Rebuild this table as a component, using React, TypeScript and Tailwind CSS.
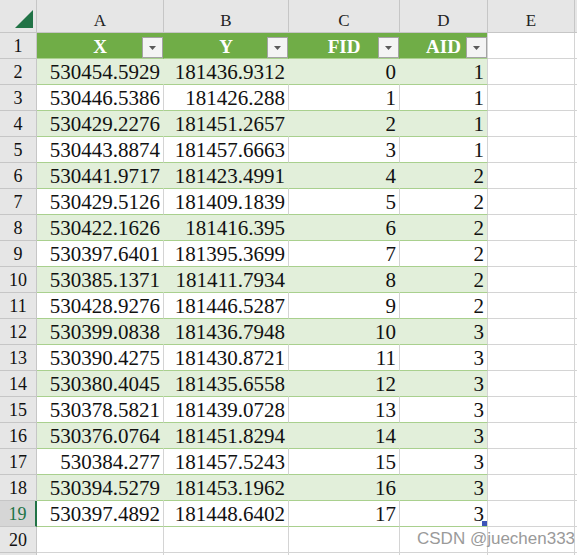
const rows: [string, string, number, number][] = [
  ['530454.5929', '181436.9312', 0, 1],
  ['530446.5386', '181426.288', 1, 1],
  ['530429.2276', '181451.2657', 2, 1],
  ['530443.8874', '181457.6663', 3, 1],
  ['530441.9717', '181423.4991', 4, 2],
  ['530429.5126', '181409.1839', 5, 2],
  ['530422.1626', '181416.395', 6, 2],
  ['530397.6401', '181395.3699', 7, 2],
  ['530385.1371', '181411.7934', 8, 2],
  ['530428.9276', '181446.5287', 9, 2],
  ['530399.0838', '181436.7948', 10, 3],
  ['530390.4275', '181430.8721', 11, 3],
  ['530380.4045', '181435.6558', 12, 3],
  ['530378.5821', '181439.0728', 13, 3],
  ['530376.0764', '181451.8294', 14, 3],
  ['530384.277', '181457.5243', 15, 3],
  ['530394.5279', '181453.1962', 16, 3],
  ['530397.4892', '181448.6402', 17, 3],
];

const RowHead = ({ n, sel }: { n?: number; sel?: boolean }) => (
  <div
    className={
      sel
        ? 'h-[26px] flex items-center justify-center border-b border-b-[#c6c6c6] border-r-2 border-r-[#217346] bg-[#d6d6d6] text-[#217346] text-[18px] pt-[1px]'
        : 'h-[26px] flex items-center justify-center border-b border-r border-[#c6c6c6] bg-[#e6e6e6] text-[#111] text-[18px] pt-[1px]'
    }
  >
    {n}
  </div>
);

const ColHead = ({ label }: { label: string }) => (
  <div className="h-[33px] flex items-center justify-center pt-[8px] border-b border-r border-[#c6c6c6] bg-[#e6e6e6] text-[17px] text-[#222]">
    {label}
  </div>
);

const FilterButton = () => (
  <div className="absolute right-0 bottom-0 w-[21px] h-[21px] border border-[#a3a3a3] bg-[#f4f4f4] flex items-center justify-center">
    <svg width="7" height="4" viewBox="0 0 7 4">
      <polygon points="0,0 7,0 3.5,4" fill="#5a5a5a" />
    </svg>
  </div>
);

const HeadCell = ({ label, last }: { label: string; last?: boolean }) => (
  <div
    className={
      'relative h-[26px] flex items-center justify-center bg-[#70ad47] border-b border-b-[#a9d08e] border-r text-white font-bold text-[19px] pt-[1px] ' +
      (last ? 'border-r-[#d4d4d4]' : 'border-r-[#70ad47]')
    }
  >
    {label}
    <FilterButton />
  </div>
);

const DataCell = ({ v, band, last, handle }: { v: string | number; band: boolean; last?: boolean; handle?: boolean }) => (
  <div
    className={
      'relative h-[26px] flex items-center justify-end pr-[3px] pt-[2px] text-[21px] text-[#111] border-b border-b-[#a9d08e] border-r ' +
      (band ? 'bg-[#e2efda] ' : 'bg-white ') +
      (last ? 'border-r-[#d4d4d4]' : band ? 'border-r-[#e2efda]' : 'border-r-[#d4d4d4]')
    }
  >
    {v}
    {handle && <div className="absolute right-0 bottom-0 w-[5px] h-[5px] bg-[#3d55b8]" />}
  </div>
);

const Blank = ({ right = true }: { right?: boolean }) => (
  <div className={'h-[26px] bg-white border-b border-[#d4d4d4] ' + (right ? 'border-r' : '')} />
);

export default function App() {
  return (
    <div className="relative w-[577px] h-[555px] overflow-hidden bg-white font-['Liberation_Serif',serif] leading-none">
      <div className="grid grid-cols-[37px_127px_125px_111px_88px_87px_1fr]">
        {/* column letters */}
        <div className="h-[33px] flex items-end justify-end pr-[3px] pb-[4px] border-b border-r border-[#c6c6c6] bg-[#e6e6e6]">
          <svg width="18" height="18" viewBox="0 0 18 18">
            <polygon points="18,0 18,18 0,18" fill="#217346" />
          </svg>
        </div>
        {['A', 'B', 'C', 'D', 'E'].map((c) => (
          <ColHead key={c} label={c} />
        ))}
        <div className="h-[33px] border-b border-[#c6c6c6] bg-[#e6e6e6]" />

        {/* table header */}
        <RowHead n={1} />
        <HeadCell label="X" />
        <HeadCell label="Y" />
        <HeadCell label="FID" />
        <HeadCell label="AID" last />
        <Blank />
        <Blank right={false} />

        {rows.map((r, i) => {
          const band = i % 2 === 0;
          const n = i + 2;
          const lastRow = n === 19;
          return [
            <RowHead key={n + 'h'} n={n} sel={lastRow} />,
            <DataCell key={n + 'a'} v={r[0]} band={band} />,
            <DataCell key={n + 'b'} v={r[1]} band={band} />,
            <DataCell key={n + 'c'} v={r[2]} band={band} />,
            <DataCell key={n + 'd'} v={r[3]} band={band} last handle={lastRow} />,
            <Blank key={n + 'e'} />,
            <Blank key={n + 'f'} right={false} />,
          ];
        })}

        {/* row 20 and the top edge of row 21 */}
        {[20, 21].map((n) => [
          <RowHead key={n + 'h'} n={n === 20 ? n : undefined} />,
          <Blank key={n + 'a'} />,
          <Blank key={n + 'b'} />,
          <Blank key={n + 'c'} />,
          <Blank key={n + 'd'} />,
          <Blank key={n + 'e'} />,
          <Blank key={n + 'f'} right={false} />,
        ])}
      </div>

      <div className="absolute left-[417px] top-[529px] font-['Liberation_Sans',sans-serif] text-[17px] leading-[20px] text-[#9a9a9a]">
        CSDN @juechen333
      </div>
    </div>
  );
}
